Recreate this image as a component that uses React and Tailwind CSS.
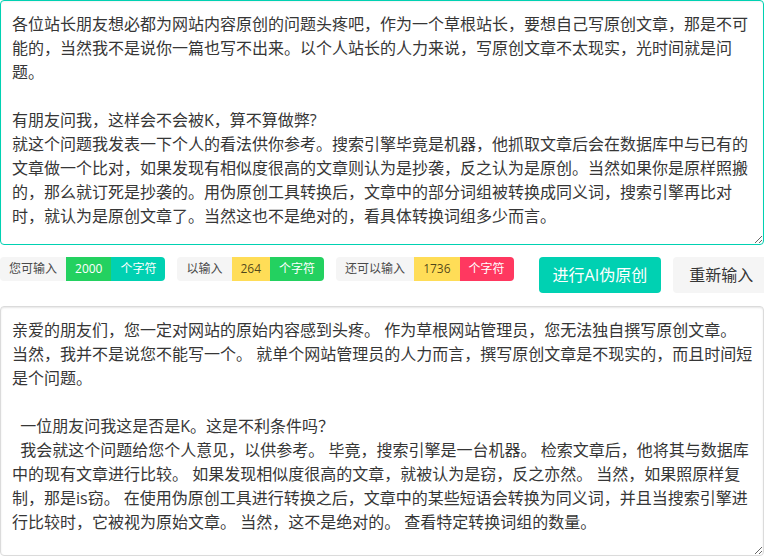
import React from "react";

const TOP_TEXT = `各位站长朋友想必都为网站内容原创的问题头疼吧，作为一个草根站长，要想自己写原创文章，那是不可能的，当然我不是说你一篇也写不出来。以个人站长的人力来说，写原创文章不太现实，光时间就是问题。

有朋友问我，这样会不会被K，算不算做弊?
就这个问题我发表一下个人的看法供你参考。搜索引擎毕竟是机器，他抓取文章后会在数据库中与已有的文章做一个比对，如果发现有相似度很高的文章则认为是抄袭，反之认为是原创。当然如果你是原样照搬的，那么就订死是抄袭的。用伪原创工具转换后，文章中的部分词组被转换成同义词，搜索引擎再比对时，就认为是原创文章了。当然这也不是绝对的，看具体转换词组多少而言。`;

const BOTTOM_TEXT = `亲爱的朋友们，您一定对网站的原始内容感到头疼。 作为草根网站管理员，您无法独自撰写原创文章。 当然，我并不是说您不能写一个。 就单个网站管理员的人力而言，撰写原创文章是不现实的，而且时间短是个问题。

  一位朋友问我这是否是K。这是不利条件吗？
  我会就这个问题给您个人意见，以供参考。 毕竟，搜索引擎是一台机器。 检索文章后，他将其与数据库中的现有文章进行比较。 如果发现相似度很高的文章，就被认为是窃，反之亦然。 当然，如果照原样复制，那是is窃。 在使用伪原创工具进行转换之后，文章中的某些短语会转换为同义词，并且当搜索引擎进行比较时，它被视为原始文章。 当然，这不是绝对的。 查看特定转换词组的数量。`;

function TagGroup({ label, value, valueClass, unitClass }) {
  return (
    <div className="flex h-6 shrink-0 text-[12px] leading-6">
      <span className="rounded-l-[4px] bg-[#f5f5f5] px-[9px] text-[#4a4a4a]">{label}</span>
      <span className={`px-[9px] ${valueClass}`}>{value}</span>
      <span className={`rounded-r-[4px] px-[9px] text-white ${unitClass}`}>个字符</span>
    </div>
  );
}

export default function App() {
  const font = "font-['Open_Sans','Noto_Sans_CJK_SC',sans-serif]";
  return (
    <div className={`flex h-[556px] w-[764px] flex-col overflow-hidden bg-white ${font}`}>
      <textarea
        defaultValue={TOP_TEXT}
        className="block h-[245px] w-full shrink-0 resize-y rounded-[4px] border border-[#00d1b2] py-[11px] pl-[11px] pr-[9px] text-[16px] leading-6 text-[#363636] shadow-[inset_0_1px_2px_rgba(10,10,10,0.05)] outline-none"
      />
      <div className="mt-[12px] flex h-9 shrink-0 items-start gap-3 overflow-hidden">
        <TagGroup label="您可输入" value="2000" valueClass="bg-[#23d160] text-white" unitClass="bg-[#00d1b2]" />
        <TagGroup label="以输入" value="264" valueClass="bg-[#ffdd57] text-[rgba(0,0,0,0.7)]" unitClass="bg-[#23d160]" />
        <TagGroup label="还可以输入" value="1736" valueClass="bg-[#ffdd57] text-[rgba(0,0,0,0.7)]" unitClass="bg-[#ff3860]" />
        <button className="ml-[13px] h-9 shrink-0 rounded-[4px] bg-[#00d1b2] px-[14px] text-[16px] text-white">
          进行AI伪原创
        </button>
        <button className="h-9 shrink-0 rounded-[4px] bg-[#f5f5f5] px-4 text-[16px] text-[#363636]">
          重新输入
        </button>
      </div>
      <textarea
        defaultValue={BOTTOM_TEXT}
        className="mt-[13px] block h-[250px] w-full shrink-0 resize-y rounded-[4px] border border-[#dbdbdb] py-[11px] pl-[11px] pr-[9px] text-[16px] leading-6 text-[#363636] shadow-[inset_0_1px_2px_rgba(10,10,10,0.1)] outline-none"
      />
    </div>
  );
}
